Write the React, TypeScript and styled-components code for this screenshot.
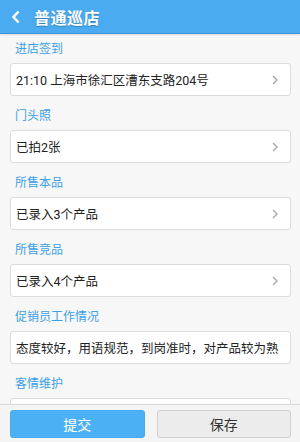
import styled, { createGlobalStyle } from "styled-components";

const GlobalStyle = createGlobalStyle`
  *, *::before, *::after {
    box-sizing: border-box;
  }
  html, body {
    margin: 0;
    padding: 0;
    background: #f7f7f7;
  }
  body {
    font-family: Roboto, "Noto Sans CJK SC", "Noto Sans", sans-serif;
  }
`;

const Page = styled.div`
  width: 300px;
  height: 442px;
  display: flex;
  flex-direction: column;
  background: #f7f7f7;
  overflow: hidden;
`;

const Header = styled.div`
  height: 34px;
  flex-shrink: 0;
  display: flex;
  align-items: center;
  gap: 13px;
  padding-left: 11px;
  background: #4aabf0;
  border-bottom: 1px solid #3b95d9;
  box-shadow: 0 1px 2px rgba(0, 0, 0, 0.12);
`;

const Title = styled.h1`
  margin: 0;
  color: #fff;
  font-size: 16px;
  font-weight: bold;
  letter-spacing: 0.5px;
  text-shadow: 0 1px 1px rgba(0, 0, 0, 0.25);
`;

const Content = styled.div`
  flex: 1;
  overflow: hidden;
  padding: 6px 9px 0 10px;
`;

const Section = styled.div`
  margin-bottom: 11px;
`;

const Label = styled.div`
  color: #3c9fe8;
  font-size: 12px;
  line-height: 18px;
  padding: 0 0 5px 5px;
`;

const Field = styled.div`
  height: 33px;
  display: flex;
  align-items: center;
  justify-content: space-between;
  padding: 0 12px 0 5px;
  background: #fff;
  border: 1px solid #dcdcdc;
  border-radius: 3px;
  font-size: 12.5px;
  color: #222;
  white-space: nowrap;
  overflow: hidden;
`;

const FieldText = styled.span`
  overflow: hidden;
`;

const Footer = styled.div`
  height: 38px;
  flex-shrink: 0;
  display: grid;
  grid-template-columns: 1fr 1fr;
  gap: 12px;
  padding: 5px 9px 4px 10px;
  background: #f4f4f4;
  border-top: 1px solid #d8d8d8;
`;

const Button = styled.button<{ primary?: boolean }>`
  height: 28px;
  border-radius: 3px;
  font-family: inherit;
  font-size: 14px;
  border: 1px solid ${(p) => (p.primary ? "#48a9ef" : "#cfcfcf")};
  background: ${(p) => (p.primary ? "#4cb0f5" : "#ececec")};
  color: ${(p) => (p.primary ? "#fff" : "#333")};
`;

const Chevron = () => (
  <svg width="6" height="10" viewBox="0 0 6 10">
    <path d="M1 1 L5 5 L1 9" fill="none" stroke="#a8a8a8" strokeWidth="1.4" />
  </svg>
);

const BackIcon = () => (
  <svg width="10" height="14" viewBox="0 0 10 14">
    <path d="M7.5 1.5 L2.5 7 L7.5 12.5" fill="none" stroke="#fff" strokeWidth="2.6" />
  </svg>
);

const rows = [
  { label: "进店签到", value: "21:10 上海市徐汇区漕东支路204号", arrow: true },
  { label: "门头照", value: "已拍2张", arrow: true },
  { label: "所售本品", value: "已录入3个产品", arrow: true },
  { label: "所售竞品", value: "已录入4个产品", arrow: true },
  {
    label: "促销员工作情况",
    value: "态度较好，用语规范，到岗准时，对产品较为熟",
    arrow: false,
  },
  { label: "客情维护", value: "", arrow: false },
];

function App() {
  return (
    <Page>
      <GlobalStyle />
      <Header>
        <BackIcon />
        <Title>普通巡店</Title>
      </Header>
      <Content>
        {rows.map((row) => (
          <Section key={row.label}>
            <Label>{row.label}</Label>
            <Field>
              <FieldText>{row.value}</FieldText>
              {row.arrow && <Chevron />}
            </Field>
          </Section>
        ))}
      </Content>
      <Footer>
        <Button primary>提交</Button>
        <Button>保存</Button>
      </Footer>
    </Page>
  );
}

export default App;
